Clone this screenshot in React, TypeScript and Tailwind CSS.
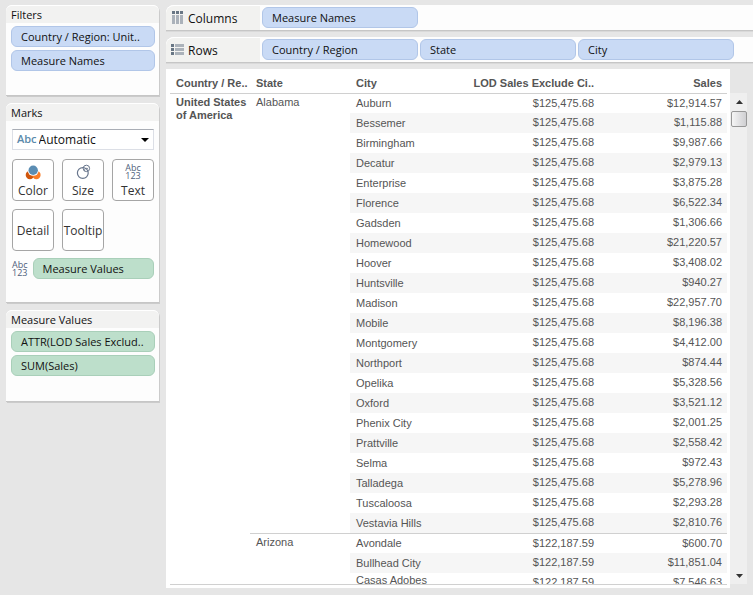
import type { ReactNode } from "react";
import clsx from "clsx";

type City = [name: string, sales: string];

const GROUPS: { state: string; lod: string; cities: City[] }[] = [
  {
    state: "Alabama",
    lod: "$125,475.68",
    cities: [
      ["Auburn", "$12,914.57"],
      ["Bessemer", "$1,115.88"],
      ["Birmingham", "$9,987.66"],
      ["Decatur", "$2,979.13"],
      ["Enterprise", "$3,875.28"],
      ["Florence", "$6,522.34"],
      ["Gadsden", "$1,306.66"],
      ["Homewood", "$21,220.57"],
      ["Hoover", "$3,408.02"],
      ["Huntsville", "$940.27"],
      ["Madison", "$22,957.70"],
      ["Mobile", "$8,196.38"],
      ["Montgomery", "$4,412.00"],
      ["Northport", "$874.44"],
      ["Opelika", "$5,328.56"],
      ["Oxford", "$3,521.12"],
      ["Phenix City", "$2,001.25"],
      ["Prattville", "$2,558.42"],
      ["Selma", "$972.43"],
      ["Talladega", "$5,278.96"],
      ["Tuscaloosa", "$2,293.28"],
      ["Vestavia Hills", "$2,810.76"],
    ],
  },
  {
    state: "Arizona",
    lod: "$122,187.59",
    cities: [
      ["Avondale", "$600.70"],
      ["Bullhead City", "$11,851.04"],
      ["Casas Adobes", "$7,546.63"],
    ],
  },
];

const ROWS = GROUPS.flatMap((g) =>
  g.cities.map(([city, sales], i) => ({
    city,
    sales,
    lod: g.lod,
    state: g.state,
    first: i === 0,
    span: g.cities.length,
  })),
);

function Pill({ color = "blue", className, children }: { color?: "blue" | "green"; className?: string; children: ReactNode }) {
  return (
    <button
      type="button"
      className={clsx(
        "h-[21px] overflow-hidden rounded-md border pl-[9px] text-left text-[11px] leading-[20px] whitespace-nowrap",
        color === "blue" ? "border-[#b1c6e8] bg-[#c9daf5]" : "border-[#a9cfb9] bg-[#bddfcb]",
        className,
      )}
    >
      {children}
    </button>
  );
}

function Card({ title, children }: { title: string; children: ReactNode }) {
  return (
    <section className="rounded-t-md border-b border-[#c6c6c6] bg-[#fdfdfd] shadow-[1px_1px_0_#cbcbcb]">
      <h2 className="h-[18px] rounded-t-md border-t border-white bg-[#f2f2f1] px-[5px] text-[11px] leading-[18px]">{title}</h2>
      {children}
    </section>
  );
}

function Shelf({ label, icon, children }: { label: string; icon: ReactNode; children: ReactNode }) {
  return (
    <section className="flex h-[26px] rounded-tl-lg border-b border-[#c6c6c6] bg-[#fdfdfd] shadow-[0_1px_0_#d9d9d9]">
      <h2 className="flex w-[94px] shrink-0 items-center gap-1 rounded-tl-lg border-t border-white bg-[#f2f2f0] pt-px pl-[5px]">
        {icon}
        {label}
      </h2>
      <div className="flex min-w-0 flex-1 gap-[2px] pt-[2px] pl-[2px]">{children}</div>
    </section>
  );
}

function ColumnsIcon() {
  return (
    <svg width="13" height="16" viewBox="0 0 13 16" aria-hidden="true">
      {[1, 5, 9].map((x) => (
        <g key={x}>
          <rect x={x} y="0" width="3" height="3" fill="#687684" />
          <rect x={x} y="4" width="3" height="9" fill="#abb2ba" />
        </g>
      ))}
    </svg>
  );
}

function RowsIcon() {
  return (
    <svg width="13" height="13" viewBox="0 0 13 13" aria-hidden="true">
      {[0, 4, 8].map((y) => (
        <g key={y}>
          <rect x="0" y={y} width="3" height="3" fill="#687684" />
          <rect x="4" y={y} width="9" height="3" fill="#abb2ba" />
        </g>
      ))}
    </svg>
  );
}

function ColorIcon() {
  return (
    <svg width="16" height="15" viewBox="0 0 16 15" aria-hidden="true">
      <circle cx="4.9" cy="10" r="4.2" fill="#d0560c" />
      <circle cx="11.4" cy="10" r="4.2" fill="#fa7d27" />
      <circle cx="8.2" cy="5.2" r="5.6" fill="#fff" />
      <circle cx="8.2" cy="5.2" r="4.7" fill="#5b8db3" />
    </svg>
  );
}

function SizeIcon() {
  return (
    <svg width="15" height="16" viewBox="0 0 15 16" fill="none" stroke="#67758c" aria-hidden="true">
      <circle cx="6.8" cy="9" r="5.4" strokeWidth="1.2" />
      <circle cx="10.4" cy="4.4" r="3.2" />
      <path d="M8.4 7C8 5 9.5 3.8 12 4.5" strokeWidth="0.8" />
    </svg>
  );
}

function TextIcon() {
  return (
    <span className="flex flex-col text-center text-[9px] leading-[8px] text-[#4f5f7b]" aria-hidden="true">
      <span>Abc</span>
      <span>123</span>
    </span>
  );
}

function MarkButton({ label, icon }: { label: string; icon?: ReactNode }) {
  return (
    <button
      type="button"
      className="flex size-[42px] flex-col items-center justify-center rounded-[4px] border border-[#a5a5a5] bg-white pt-[2px] whitespace-nowrap text-[#333]"
    >
      {icon && <span className="flex h-[19px] items-center">{icon}</span>}
      <span className="leading-[18px]">{label}</span>
    </button>
  );
}

function Sidebar() {
  return (
    <aside className="flex w-[153px] shrink-0 flex-col gap-[7px]">
      <Card title="Filters">
        <div className="flex flex-col gap-[3px] pt-[3px] pr-1 pb-[24px] pl-[5px]">
          <Pill>Country / Region: Unit..</Pill>
          <Pill>Measure Names</Pill>
        </div>
      </Card>

      <Card title="Marks">
        <div className="pt-2 pr-[5px] pb-[23px] pl-[6px]">
          <label className="flex h-[21px] items-center border border-[#dcdfe6] border-t-[#a9adb5] bg-white px-1">
            <span className="text-[11px] font-semibold text-[#5b8aab]">Abc</span>
            <select aria-label="Mark type" className="min-w-0 flex-1 appearance-none bg-transparent pl-[2px] outline-none">
              <option>Automatic</option>
            </select>
            <svg width="8" height="4" viewBox="0 0 8 4" aria-hidden="true">
              <path d="M0 0h8L4 4z" />
            </svg>
          </label>
          <div className="mt-[9px] grid grid-cols-[42px_42px_42px] gap-2">
            <MarkButton label="Color" icon={<ColorIcon />} />
            <MarkButton label="Size" icon={<SizeIcon />} />
            <MarkButton label="Text" icon={<TextIcon />} />
            <MarkButton label="Detail" />
            <MarkButton label="Tooltip" />
          </div>
          <div className="mt-[7px] flex items-center gap-[5px]">
            <TextIcon />
            <Pill color="green" className="min-w-0 flex-1">
              Measure Values
            </Pill>
          </div>
        </div>
      </Card>

      <Card title="Measure Values">
        <div className="flex flex-col gap-[3px] pt-[3px] pr-1 pb-[25px] pl-[5px]">
          <Pill color="green">ATTR(LOD Sales Exclud..</Pill>
          <Pill color="green">SUM(Sales)</Pill>
        </div>
      </Card>
    </aside>
  );
}

function ScrollBar() {
  return (
    <div className="mt-6 mb-1 flex w-[17px] shrink-0 flex-col bg-[#efefef] pl-px">
      <button type="button" aria-label="Scroll up" className="flex h-[18px] items-center justify-center">
        <svg width="7" height="4" viewBox="0 0 7 4" aria-hidden="true">
          <path d="M3.5 0L7 4H0z" fill="#333" />
        </svg>
      </button>
      <div className="h-4 rounded-[2px] border border-[#979797] bg-gradient-to-r from-[#f5f5f5] to-[#cfcfd2]" />
      <button type="button" aria-label="Scroll down" className="mt-auto flex h-[17px] items-center justify-center">
        <svg width="7" height="4" viewBox="0 0 7 4" aria-hidden="true">
          <path d="M0 0h7L3.5 4z" fill="#333" />
        </svg>
      </button>
    </div>
  );
}

function CrossTab() {
  return (
    <div className="flex min-w-0 flex-1 flex-col bg-white pr-[3px] pb-[3px] pl-1">
      <div className="min-h-0 flex-1 overflow-hidden border-b border-[#d0d0d0]">
        <table className="w-full table-fixed border-separate border-spacing-0 font-['Liberation_Sans',Arial,sans-serif] text-[11px] text-[#555]">
          <colgroup>
            <col className="w-20" />
            <col className="w-[100px]" />
            <col className="w-[118px]" />
            <col />
            <col className="w-[129px]" />
          </colgroup>
          <thead>
            <tr className="h-6 whitespace-nowrap">
              <th className="px-[6px] pt-1 pb-0 text-left">Country / Re..</th>
              <th className="px-[6px] pt-1 pb-0 text-left">State</th>
              <th className="px-[6px] pt-1 pb-0 text-left">City</th>
              <th className="px-1 pt-1 pb-0 text-right">LOD Sales Exclude Ci..</th>
              <th className="px-[5px] pt-1 pb-0 text-right">Sales</th>
            </tr>
          </thead>
          <tbody>
            {ROWS.map((row, i) => {
              const line = row.first && "border-t border-[#d0d0d0]";
              const stripe = i % 2 === 1 && "bg-[#f6f6f6]";
              const last = i === ROWS.length - 1;
              return (
                <tr key={row.city} className="h-5">
                  {i === 0 && (
                    <th rowSpan={ROWS.length} className={clsx("pt-[2px] pr-0 pl-[6px] text-left align-top leading-[13px]", line)}>
                      United States of America
                    </th>
                  )}
                  {row.first && (
                    <td rowSpan={row.span} className={clsx("px-[6px] pt-[2px] align-top leading-[13px]", line)}>
                      {row.state}
                    </td>
                  )}
                  <td className={clsx("px-[6px] py-0", last ? "align-top leading-[14px]" : "leading-[19px]", line, stripe)}>
                    {row.city}
                  </td>
                  <td className={clsx("px-1 py-0 text-right align-top leading-[18px]", line, stripe)}>{row.lod}</td>
                  <td className={clsx("px-[5px] py-0 text-right align-top leading-[18px]", line, stripe)}>{row.sales}</td>
                </tr>
              );
            })}
          </tbody>
        </table>
      </div>
    </div>
  );
}

export default function App() {
  return (
    <div className="flex h-screen gap-[7px] overflow-hidden bg-[#e6e6e6] pt-[5px] pb-[7px] pl-[6px] font-['Open_Sans','Noto_Sans',sans-serif] text-[12px] text-[#111]">
      <Sidebar />
      <main className="flex min-w-0 flex-1 flex-col">
        <div className="flex flex-col gap-[6px]">
          <Shelf label="Columns" icon={<ColumnsIcon />}>
            <Pill className="w-[156px]">Measure Names</Pill>
          </Shelf>
          <Shelf label="Rows" icon={<RowsIcon />}>
            <Pill className="w-[156px]">Country / Region</Pill>
            <Pill className="w-[156px]">State</Pill>
            <Pill className="w-[156px]">City</Pill>
          </Shelf>
        </div>
        <div className="mt-[6px] mr-[6px] flex min-h-0 flex-1">
          <CrossTab />
          <ScrollBar />
        </div>
      </main>
    </div>
  );
}
